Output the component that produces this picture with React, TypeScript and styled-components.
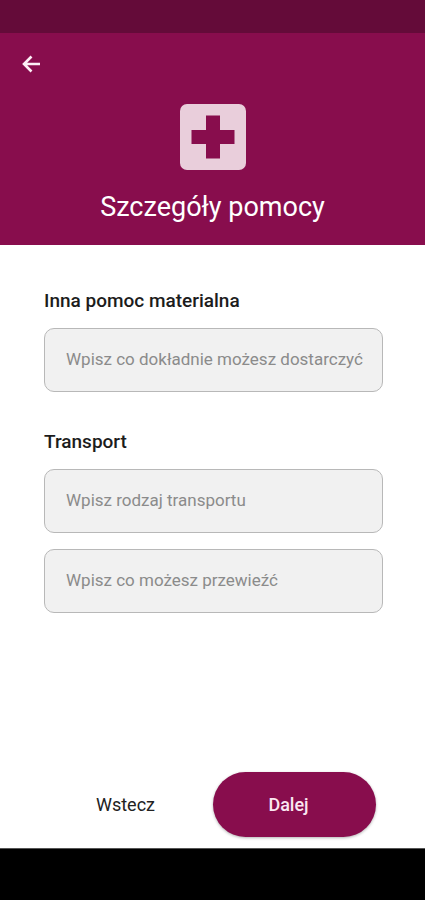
import React from "react";
import styled, { createGlobalStyle } from "styled-components";

const GlobalStyle = createGlobalStyle`
  *, *::before, *::after { box-sizing: border-box; }
  body { margin: 0; background: #fff; font-family: Roboto, sans-serif; }
`;

const Screen = styled.div`
  min-height: 100vh;
  display: flex;
  flex-direction: column;
  background: #fff;
`;

const StatusBar = styled.div`
  height: 33px;
  background: #640b39;
`;

const Header = styled.header`
  display: flex;
  flex-direction: column;
  padding: 16px 16px 20px;
  background: #880d4d;
  color: #fff;
`;

const BackButton = styled.button`
  width: 30px;
  height: 30px;
  padding: 3px;
  border: 0;
  background: none;
  color: #fdeff6;
  cursor: pointer;
  svg { display: block; }
`;

const Emblem = styled.svg`
  align-self: center;
  margin: 25px 0 20px;
`;

const Title = styled.h1`
  margin: 0;
  text-align: center;
  font-size: 27px;
  line-height: 35px;
  font-weight: 400;
`;

const Form = styled.form`
  flex: 1;
  display: flex;
  flex-direction: column;
`;

const Fields = styled.div`
  flex: 1;
  display: flex;
  flex-direction: column;
  gap: 38px;
  padding: 44px 42px 24px 44px;
`;

const Group = styled.div`
  display: flex;
  flex-direction: column;
  gap: 16px;
`;

const Label = styled.label`
  font-size: 19px;
  line-height: 23px;
  font-weight: 500;
  color: #1c1c1c;
`;

const TextField = styled.input`
  width: 100%;
  height: 64px;
  padding: 0 12px 2px 21px;
  border: 1px solid #b8b8b8;
  border-radius: 10px;
  background: #f1f1f1;
  font: 400 17px Roboto, sans-serif;
  color: #222;
  &::placeholder { color: #8b8b8b; opacity: 1; }
`;

const Actions = styled.div`
  display: flex;
  justify-content: flex-end;
  padding: 0 49px 11px 44px;
`;

const Button = styled.button<{ $primary?: boolean }>`
  width: 163px;
  height: 65px;
  padding: 0 12px 0 0;
  border: 0;
  border-radius: 33px;
  font: ${(p) => (p.$primary ? 500 : 400)} 18px Roboto, sans-serif;
  color: ${(p) => (p.$primary ? "#fbe6f0" : "#222")};
  background: ${(p) => (p.$primary ? "#880d4d" : "transparent")};
  box-shadow: ${(p) => (p.$primary ? "0 1px 3px rgba(0, 0, 0, 0.3)" : "none")};
  cursor: pointer;
`;

const NavigationBar = styled.div`
  height: 52px;
  border-top: 1px solid #555;
  background: #000;
`;

export default function App() {
  return (
    <Screen>
      <GlobalStyle />
      <StatusBar />
      <Header>
        <BackButton type="button" aria-label="Wróć">
          <svg width="24" height="24" viewBox="0 0 24 24" fill="none" stroke="currentColor">
            <path d="M21 12H5.5M12.5 4.5L5 12l7.5 7.5" strokeWidth="2.6" />
          </svg>
        </BackButton>
        <Emblem width="66" height="66" viewBox="0 0 66 66" aria-hidden="true">
          <rect width="66" height="66" rx="7" fill="#e9cedb" />
          <path d="M26 11.5h14v14.5h14.5v14H40v14.5H26V40H11.5V26H26z" fill="#880d4d" />
        </Emblem>
        <Title>Szczegóły pomocy</Title>
      </Header>
      <Form onSubmit={(e) => e.preventDefault()}>
        <Fields>
          <Group>
            <Label htmlFor="material">Inna pomoc materialna</Label>
            <TextField id="material" placeholder="Wpisz co dokładnie możesz dostarczyć" />
          </Group>
          <Group>
            <Label htmlFor="transport">Transport</Label>
            <TextField id="transport" placeholder="Wpisz rodzaj transportu" />
            <TextField aria-label="Co możesz przewieźć" placeholder="Wpisz co możesz przewieźć" />
          </Group>
        </Fields>
        <Actions>
          <Button type="button">Wstecz</Button>
          <Button type="submit" $primary>Dalej</Button>
        </Actions>
      </Form>
      <NavigationBar />
    </Screen>
  );
}
